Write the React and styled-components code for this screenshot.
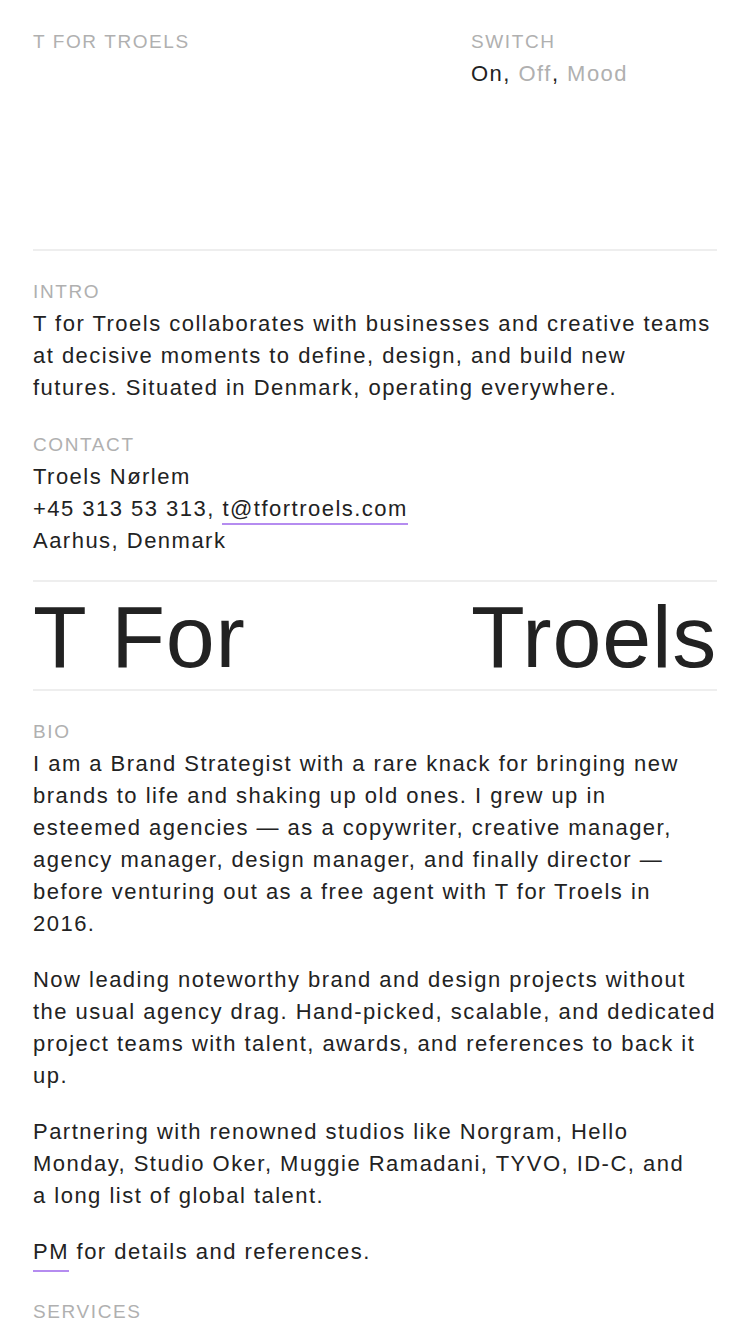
import styled, { createGlobalStyle } from "styled-components";

const GlobalStyle = createGlobalStyle`
  html, body {
    margin: 0;
    padding: 0;
    background: #ffffff;
  }
  body {
    font-family: "Liberation Sans", Arial, sans-serif;
    color: #222222;
    -webkit-font-smoothing: antialiased;
  }
  * {
    box-sizing: border-box;
  }
`;

const bio = [
  "I am a Brand Strategist with a rare knack for bringing new brands to life and shaking up old ones. I grew up in esteemed agencies \u2014 as a copywriter, creative manager, agency manager, design manager, and finally director \u2014 before venturing out as a free agent with T for Troels in 2016.",
  "Now leading noteworthy brand and design projects without the usual agency drag. Hand-picked, scalable, and dedicated project teams with talent, awards, and references to back it up.",
  "Partnering with renowned studios like Norgram, Hello Monday, Studio Oker, Muggie Ramadani, TYVO, ID-C, and a\u00a0long list of global talent.",
];

export default function App() {
  return (
    <Page>
      <GlobalStyle />
      <Header>
        <div>
          <Label>T for Troels</Label>
        </div>
        <div>
          <Label>Switch</Label>
          <Text>
            On, <Muted>Off</Muted>, <Muted>Mood</Muted>
          </Text>
        </div>
      </Header>

      <Section $gap={29}>
        <Block>
          <Label>Intro</Label>
          <Text>
            T for Troels collaborates with businesses and creative teams at
            decisive moments to define, design, and build new futures. Situated
            in Denmark, operating everywhere.
          </Text>
        </Block>
        <Block>
          <Label>Contact</Label>
          <Text>
            Troels Nørlem
            <br />
            +45 313 53 313, <Link href="#">t@tfortroels.com</Link>
            <br />
            Aarhus, Denmark
          </Text>
        </Block>
      </Section>

      <Hero>
        <span>T For</span>
        <span>Troels</span>
      </Hero>

      <Section $gap={32}>
        <Block>
          <Label>Bio</Label>
          {bio.map((p, i) => (
            <Paragraph key={i}>{p}</Paragraph>
          ))}
          <Paragraph>
            <Link href="#" $thick>PM</Link> for details and references.
          </Paragraph>
        </Block>
        <Block>
          <Label>Services</Label>
          <Text>
            Positioning, Brand Strategy, Brand Naming, Brand Identity, Concept
            Development, Tone of Voice
          </Text>
        </Block>
      </Section>
    </Page>
  );
}

const Page = styled.div`
  padding: 0 33px 40px 33px;
  width: 100%;
`;

const Header = styled.header`
  display: grid;
  grid-template-columns: 438px 1fr;
  height: 251px;
  padding-top: 30px;
  border-bottom: 2px solid #eeeeee;
`;

const Label = styled.div`
  font-size: 19px;
  line-height: 24px;
  margin-bottom: 4px;
  letter-spacing: 1.6px;
  text-transform: uppercase;
  color: #b0b0b0;
`;

const Text = styled.div`
  font-size: 22px;
  line-height: 32px;
  letter-spacing: 1.48px;
  color: #222222;
`;

const Muted = styled.span`
  color: #b0b0b0;
`;

const Section = styled.section`
  display: flex;
  flex-direction: column;
  gap: ${(p) => p.$gap}px;
  padding-top: 29px;
  padding-bottom: 23px;
`;

const Block = styled.div`
  display: flex;
  flex-direction: column;
`;

const Paragraph = styled.p`
  margin: 0 0 24px 0;
  font-size: 22px;
  line-height: 32px;
  letter-spacing: 1.48px;
  color: #222222;

  &:last-child {
    margin-bottom: 0;
  }
`;

const Link = styled.a`
  color: inherit;
  text-decoration: none;
  padding-bottom: ${(p) => (p.$thick ? 6 : 2)}px;
  border-bottom: 2px solid #b58cf0;
`;

const Hero = styled.h1`
  display: grid;
  grid-template-columns: 438px 1fr;
  margin: 0;
  padding: 10px 0 7px 0;
  border-top: 2px solid #eeeeee;
  border-bottom: 2px solid #eeeeee;
  font-size: 88px;
  line-height: 90px;
  font-weight: 400;
  letter-spacing: 0.8px;
  color: #222222;
  white-space: nowrap;
`;
